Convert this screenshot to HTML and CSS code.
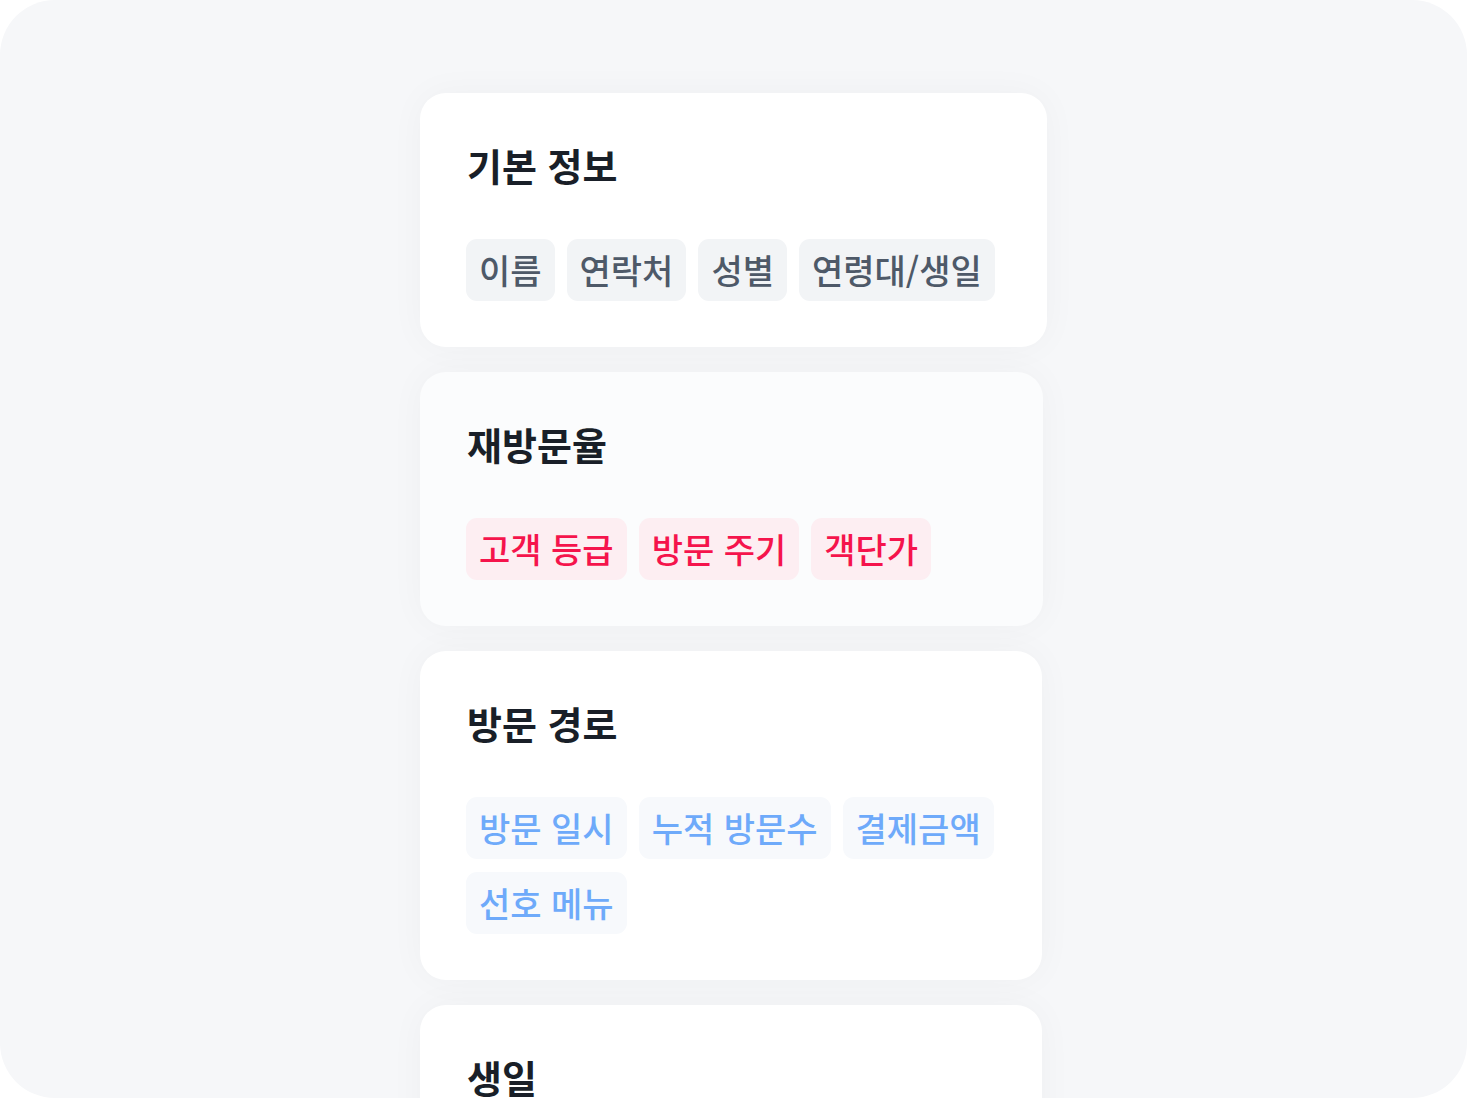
FILE: index.html
```html
<!DOCTYPE html>
<html lang="ko">
<head>
<meta charset="utf-8">
<title>고객 정보 항목</title>
<link rel="stylesheet" href="styles.css">
</head>
<body>
  <main class="frame">
    <div class="stack">
      <section class="card card-main">
        <h2 class="card-title">기본 정보</h2>
        <ul class="chips">
          <li class="chip chip-gray">이름</li>
          <li class="chip chip-gray">연락처</li>
          <li class="chip chip-gray">성별</li>
          <li class="chip chip-gray">연령대/생일</li>
        </ul>
      </section>

      <section class="card card-soft">
        <h2 class="card-title">재방문율</h2>
        <ul class="chips">
          <li class="chip chip-red">고객 등급</li>
          <li class="chip chip-red">방문 주기</li>
          <li class="chip chip-red">객단가</li>
        </ul>
      </section>

      <section class="card">
        <h2 class="card-title">방문 경로</h2>
        <ul class="chips">
          <li class="chip chip-blue">방문 일시</li>
          <li class="chip chip-blue">누적 방문수</li>
          <li class="chip chip-blue">결제금액</li>
          <li class="chip chip-blue">선호 메뉴</li>
        </ul>
      </section>

      <section class="card">
        <h2 class="card-title">생일</h2>
      </section>
    </div>
  </main>
</body>
</html>
```

FILE: styles.css
```css
html, body {
  margin: 0;
  padding: 0;
  background: #ffffff;
}

body {
  font-family: "Noto Sans CJK KR", "Noto Sans", sans-serif;
  width: 1467px;
  height: 1098px;
  overflow: hidden;
}

.frame {
  width: 1467px;
  height: 1098px;
  border-radius: 55px;
  background: #f6f7f9;
  overflow: hidden;
  display: flex;
  justify-content: center;
}

.stack {
  display: flex;
  flex-direction: column;
  align-items: flex-start;
  gap: 25px;
  padding-top: 93px;
  width: 627px;
}

.card {
  box-sizing: border-box;
  width: 622px;
  background: #ffffff;
  border-radius: 26px;
  padding: 46px 46px 46px 47px;
  box-shadow: 0 0 36px rgba(30, 40, 60, 0.035);
}

.card-main {
  width: 627px;
}

.card-soft {
  width: 623px;
  background: #fbfcfd;
}

.card-title {
  margin: 0 0 48px;
  font-size: 38px;
  line-height: 52px;
  font-weight: 700;
  color: #191f28;
}

.chips {
  list-style: none;
  margin: 0 0 0 -1px;
  padding: 0;
  display: flex;
  flex-wrap: wrap;
  gap: 13px 12px;
}

.chip {
  font-size: 34px;
  line-height: 46px;
  font-weight: 500;
  padding: 8px 13px;
  border-radius: 11px;
}

.chip-gray {
  background: #f2f4f6;
  color: #4e5968;
}

.chip-red {
  background: #fdeef2;
  color: #f5144c;
}

.chip-blue {
  background: #f7f9fc;
  color: #6eaafa;
}
```
